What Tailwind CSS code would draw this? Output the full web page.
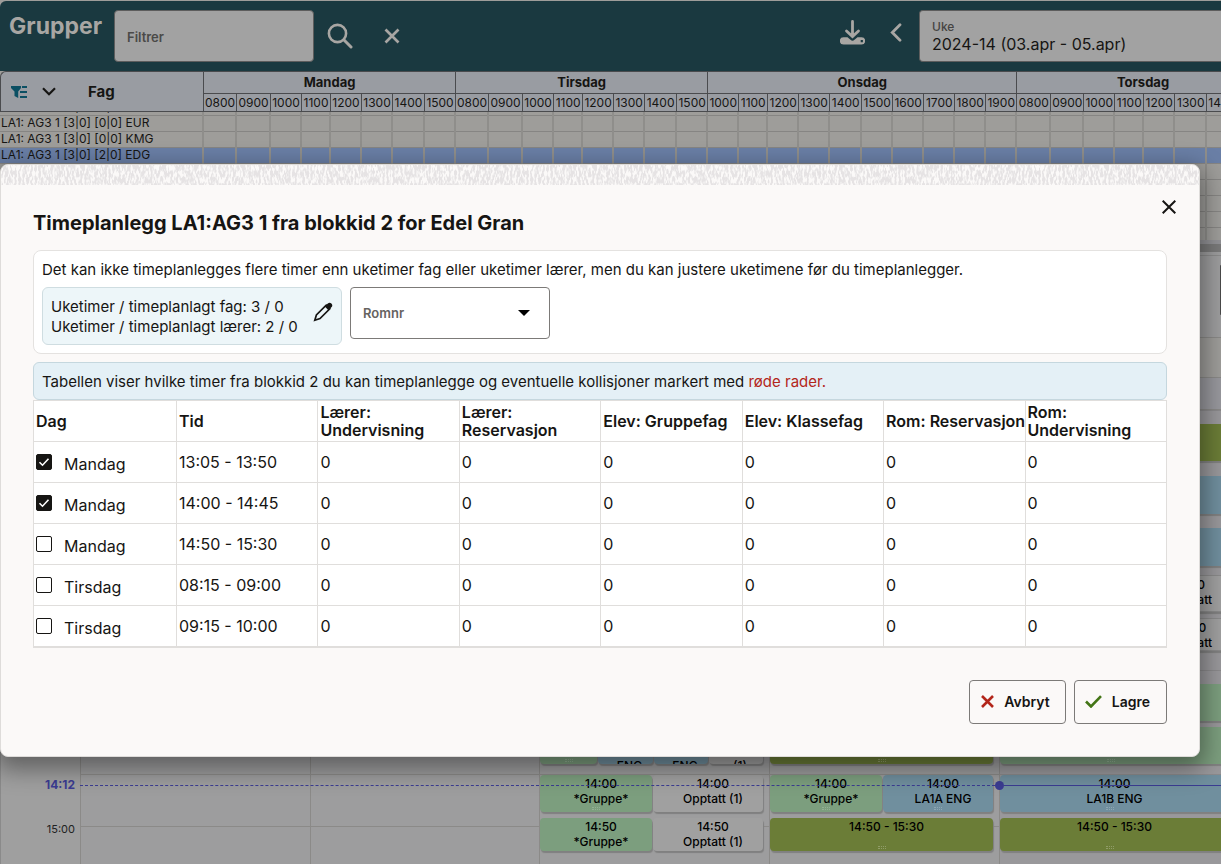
<!DOCTYPE html>
<html lang="no">
<head>
<meta charset="utf-8">
<title>Timeplanlegg</title>
<meta name="viewport" content="width=device-width, initial-scale=1">
<script src="https://cdn.jsdelivr.net/npm/@tailwindcss/browser@4"></script>
</head>
<body class="relative flex h-screen flex-col overflow-hidden bg-[#9e9d9a] pt-px font-['Inter',sans-serif] text-[#161513]">

<!-- Top bar -->
<header class="flex h-[70px] shrink-0 items-start overflow-hidden rounded-tl-md bg-[#1a3940] pl-[9px] text-[#a8a6a3]">
  <h1 class="mt-[9px] w-[105px] text-[23px] font-bold leading-8">Grupper</h1>
  <input type="text" aria-label="Filtrer" placeholder="Filtrer" class="mt-[9px] h-[52px] w-[200px] rounded border border-[#5d5d5d] bg-[#a2a2a2] px-3 pt-[2px] text-[13px] font-semibold text-[#161513] placeholder:text-[#4b4a48]">
  <button type="button" aria-label="Søk" class="mt-[22px] ml-[13px]">
    <svg class="h-[26px] w-[26px]" viewBox="0 0 26 26" fill="none" stroke="currentColor" stroke-width="2.600"><circle cx="10.500" cy="10.500" r="8.600"/><path d="M16.800 16.800 24 24" stroke-width="3" stroke-linecap="round"/></svg>
  </button>
  <button type="button" aria-label="Tøm" class="mt-[27px] ml-[31px]">
    <svg class="h-4 w-4" viewBox="0 0 16 16" fill="none" stroke="currentColor" stroke-width="2.700"><path d="m1.500 1.500 13 13m0-13-13 13"/></svg>
  </button>
  <div class="flex-1"></div>
  <button type="button" aria-label="Last ned" class="mt-[19px] mr-[25px]">
    <svg class="h-[25px] w-[25px]" viewBox="0 0 25 25"><path d="M12.500 1.500v14M6.500 11l6 5.500 6-5.500" fill="none" stroke="currentColor" stroke-width="2.800" stroke-linecap="round"/><path fill="currentColor" fill-rule="evenodd" d="M3.500 17.200h4l3 2.600a3 3 0 0 0 4 0l3-2.600h4a3.500 3.500 0 0 1 0 7.300h-18a3.500 3.500 0 0 1 0-7.300Zm17.200 2.800v2.200h2.200V20Z"/></svg>
  </button>
  <button type="button" aria-label="Forrige uke" class="mt-[22px] mr-[17px]">
    <svg class="h-[19px] w-[12px]" viewBox="0 0 12 19" fill="none" stroke="currentColor" stroke-width="2.800" stroke-linecap="round"><path d="M10 1.800 2.300 9.500l7.700 7.700"/></svg>
  </button>
  <div class="mt-[9px] h-[52px] w-[302px] shrink-0 rounded-l border border-r-0 border-[#5d5d5d] bg-[#a2a2a2] pt-2 pl-3 text-[#161513]">
    <label for="uke" class="block text-xs font-medium leading-4 text-[#454442]">Uke</label>
    <select id="uke" class="block w-full appearance-none text-base leading-[18px]"><option>2024-14 (03.apr - 05.apr)</option></select>
  </div>
</header>

<!-- Timeline -->
<section class="shrink-0 overflow-hidden" aria-label="Grupper per time">
  <div class="flex h-[41px] rounded-tl-md border-y border-l border-[#4a4b4e] bg-[#999ca2]">
    <div class="flex w-[202px] shrink-0 items-center pl-[10px]">
      <button type="button" aria-label="Filter"><svg class="h-[14px] w-4 text-[#0b4f63]" viewBox="0 0 16 14" fill="currentColor"><path d="M0 1h10v2L7.200 6.500V13L3.500 11V6.500L0 3ZM11 1h5v2h-5ZM9 6h7v2H9ZM9 11h7v2H9Z"/></svg></button>
      <button type="button" aria-label="Vis mer" class="ml-[15px]"><svg class="h-[9px] w-[14px]" viewBox="0 0 14 9" fill="none" stroke="currentColor" stroke-width="2.200"><path d="m1 1.200 6 6 6-6"/></svg></button>
      <span class="ml-8 pt-[2px] text-[15px] font-bold">Fag</span>
    </div>
    <table class="w-[1065px] shrink-0 table-fixed border-collapse text-[13px]">
      <colgroup id="headcols"></colgroup>
      <thead id="head"></thead>
    </table>
  </div>
  <div class="h-[128px] overflow-hidden">
    <table class="-mt-[13px] w-[1268px] table-fixed border-collapse text-xs">
      <colgroup id="bodycols"></colgroup>
      <tbody id="body"></tbody>
    </table>
  </div>
</section>
<div class="h-3 shrink-0 border-t-4 border-[#929296] bg-[#7a7a7a]"></div>

<!-- Calendar -->
<section class="flex min-h-0 flex-1 flex-col bg-[#9d9d9e] pt-[3px]" aria-label="Kalender">
  <div class="flex h-[82px] shrink-0 justify-end border-t border-[#8b8b8b] pt-[9px]">
    <button type="button" aria-label="Neste" class="h-[50px] w-px rounded-l bg-[#4a4a4a]"></button>
  </div>
  <div class="h-[41px] shrink-0 border-y border-[#8a8987] bg-[#9e9d9a]"></div>
  <div class="h-[32px] shrink-0 border-b border-[#8a8987] bg-[#98989d]"></div>
  <div class="relative grid min-h-0 flex-1 grid-cols-[80px_230px_229px_230px_230px_230px] text-center text-xs font-medium leading-[15px] text-black">
    <div class="flex flex-col border-l border-[#8a8a8a] bg-[#9f9f9f] pt-[368px] pr-[5px] text-right text-[11px] leading-[14px]">
      <time class="text-xs leading-[14px] font-bold text-[#3b3c92]">14:12</time>
      <time class="mt-[30px] font-normal text-[#222]">15:00</time>
    </div>
    <div class="border-l border-[#8b8a88] bg-[repeating-linear-gradient(to_bottom,#8b8a88_0_1px,transparent_1px_52px)]"></div>
    <div class="border-l border-[#8b8a88] bg-[repeating-linear-gradient(to_bottom,#8b8a88_0_1px,transparent_1px_52px)]"></div>
    <div class="flex flex-col gap-[6px] overflow-hidden border-l border-[#8b8a88] bg-[repeating-linear-gradient(to_bottom,#8b8a88_0_1px,transparent_1px_52px)] pt-[317px] pr-[6px]">
      <div class="mb-[5px] grid h-[37px] grid-cols-[57px_55px_54px_54px] gap-px">
        <div class="flex items-end justify-center rounded-sm bg-[#7c9e7e] pb-[2px] shadow-[1px_2px_1px_#808080]"><i class="h-[3px] w-2 border-y border-dotted border-[#93b095]"></i></div>
        <div class="overflow-hidden rounded-sm bg-[#708f9e] pt-[31px] pl-2 shadow-[1px_2px_1px_#808080]">ENG</div>
        <div class="overflow-hidden rounded-sm bg-[#708f9e] pt-[31px] pl-2 shadow-[1px_2px_1px_#808080]">ENG</div>
        <div class="overflow-hidden rounded-sm bg-[#a0a0a0] pt-[31px] pl-2 shadow-[1px_2px_1px_#808080]">(1)</div>
      </div>
      <div class="flex h-[37px] gap-px">
        <div class="flex w-[112px] flex-col items-center rounded-sm bg-[#7c9e7e] pt-px shadow-[1px_2px_1px_#808080]"><span class="pl-[10px]">14:00<br>*Gruppe*</span><i class="mt-px h-[3px] w-2 shrink-0 border-y border-dotted border-[#93b095]"></i></div>
        <div class="flex-1 rounded-sm bg-[#a0a0a0] pt-px pl-[10px] shadow-[1px_2px_1px_#808080]">14:00<br>Opptatt (1)</div>
      </div>
      <div class="flex h-[33px] gap-px">
        <div class="w-[112px] rounded-sm bg-[#7c9e7e] pt-px pl-[10px] shadow-[1px_2px_1px_#808080]">14:50<br>*Gruppe*</div>
        <div class="flex-1 rounded-sm bg-[#a0a0a0] pt-px pl-[10px] shadow-[1px_2px_1px_#808080]">14:50<br>Opptatt (1)</div>
      </div>
    </div>
    <div class="flex flex-col gap-[6px] overflow-hidden border-l border-[#8b8a88] bg-[repeating-linear-gradient(to_bottom,#8b8a88_0_1px,transparent_1px_52px)] pt-[317px] pr-[6px]">
      <div class="mb-[5px] flex h-[37px] items-end justify-center rounded-sm bg-[#6b7d37] pb-[2px] shadow-[1px_2px_1px_#808080]"><i class="h-[3px] w-2 border-y border-dotted border-[#909c68]"></i></div>
      <div class="flex h-[37px] gap-px">
        <div class="flex w-[112px] flex-col items-center rounded-sm bg-[#7c9e7e] pt-px shadow-[1px_2px_1px_#808080]"><span class="pl-[10px]">14:00<br>*Gruppe*</span><i class="mt-px h-[3px] w-2 shrink-0 border-y border-dotted border-[#93b095]"></i></div>
        <div class="flex flex-1 flex-col items-center rounded-sm bg-[#708f9e] pt-px shadow-[1px_2px_1px_#808080]"><span class="pl-[10px]">14:00<br>LA1A ENG</span><i class="mt-px h-[3px] w-2 shrink-0 border-y border-dotted border-[#8ea6b2]"></i></div>
      </div>
      <div class="flex h-[33px] flex-col items-center justify-between rounded-sm bg-[#6b7d37] pt-px pb-[2px] shadow-[1px_2px_1px_#808080]"><span class="pl-[10px]">14:50 - 15:30</span><i class="h-[3px] w-2 border-y border-dotted border-[#909c68]"></i></div>
    </div>
    <div class="flex flex-col overflow-hidden border-l border-[#8b8a88] bg-[#99989b] bg-[repeating-linear-gradient(to_bottom,#8b8a8c_0_1px,transparent_1px_52px)] pt-[14px]">
      <div class="h-[37px] shrink-0 rounded-sm bg-[#6b7d37] shadow-[1px_2px_1px_#808080]"></div>
      <div class="mt-[15px] h-[38px] shrink-0 rounded-sm bg-[#708f9e] shadow-[1px_2px_1px_#808080]"></div>
      <div class="mt-[14px] h-[38px] shrink-0 rounded-sm bg-[#708f9e] shadow-[1px_2px_1px_#808080]"></div>
      <div class="mt-[9px] h-[37px] shrink-0 rounded-sm border border-[#8a8a8a] bg-[#a0a0a0] pt-px pr-4 text-right shadow-[1px_2px_1px_#808080]"><span class="inline-block text-center">12:10<br>Opptatt</span></div>
      <div class="mt-[6px] h-[33px] shrink-0 rounded-sm border border-[#8a8a8a] bg-[#a0a0a0] pt-px pr-4 text-right shadow-[1px_2px_1px_#808080]"><span class="inline-block text-center">12:50<br>Opptatt</span></div>
      <div class="mt-[33px] h-[37px] shrink-0 rounded-sm bg-[#7c9e7e] shadow-[1px_2px_1px_#808080]"></div>
      <div class="mt-[6px] flex h-[37px] shrink-0 items-end justify-center rounded-sm bg-[#7c9e7e] pr-2 pb-[2px] shadow-[1px_2px_1px_#808080]"><i class="h-[3px] w-2 border-y border-dotted border-[#93b095]"></i></div>
      <div class="mt-[11px] flex h-[37px] shrink-0 flex-col items-center rounded-sm bg-[#708f9e] pt-px shadow-[1px_2px_1px_#808080]"><span>14:00<br>LA1B ENG</span><i class="mt-px mr-[10px] h-[3px] w-2 shrink-0 border-y border-dotted border-[#8ea6b2]"></i></div>
      <div class="mt-[6px] flex h-[33px] shrink-0 flex-col items-center justify-between rounded-sm bg-[#6b7d37] pt-px pb-[2px] shadow-[1px_2px_1px_#808080]">14:50 - 15:30<i class="mr-[10px] h-[3px] w-2 border-y border-dotted border-[#909c68]"></i></div>
    </div>
    <!-- Current time marker -->
    <div class="absolute top-[371px] right-0 left-[80px] flex h-[9px] items-center">
      <span class="w-[915px] border-t border-dashed border-[#3b3c92]"></span>
      <span class="h-[9px] w-[9px] rounded-full bg-[#3b3c92]"></span>
      <span class="flex-1 border-t border-[#3b3c92]"></span>
    </div>
  </div>
</section>

<!-- Dialog -->
<div role="dialog" aria-modal="true" aria-labelledby="dlg-title" class="absolute top-[164px] right-[21px] left-0 overflow-hidden rounded-lg border border-[#dedcda] bg-[#fbf9f8] shadow-[0_8px_24px_4px_rgba(0,0,0,0.4)]">
  <svg class="block h-[20px] w-full" aria-hidden="true">
    <filter id="weave" x="0" y="0" width="100%" height="100%" color-interpolation-filters="sRGB"><feTurbulence type="fractalNoise" baseFrequency="0.5 0.16" numOctaves="2" seed="4"/><feColorMatrix values="0 0 0 0 0.900  0 0 0 0 0.892  0 0 0 0 0.895  0 0 0 6 -2.400"/></filter>
    <rect width="100%" height="100%" filter="url(#weave)"/>
  </svg>
  <div class="flex flex-col px-8 pb-8">
    <div class="flex h-[65px] justify-between">
      <h2 id="dlg-title" class="mt-6 text-xl font-bold leading-7">Timeplanlegg LA1:AG3 1 fra blokkid 2 for Edel Gran</h2>
      <button type="button" aria-label="Lukk" class="mt-[15px] -mr-[9px] h-[14px] w-[14px]"><svg viewBox="0 0 14 14" fill="none" stroke="currentColor" stroke-width="2"><path d="m.700.700 12.600 12.600m0-12.600L.700 13.300"/></svg></button>
    </div>
    <div class="h-[104px] rounded-lg border border-[#e4e2e0] bg-white px-2 pt-[9px]">
      <p class="text-[15px] leading-5 whitespace-nowrap">Det kan ikke timeplanlegges flere timer enn uketimer fag eller uketimer lærer, men du kan justere uketimene før du timeplanlegger.</p>
      <div class="mt-[7px] flex gap-2">
        <div class="flex h-[58px] w-[300px] items-center justify-between rounded-md border border-[#cfdde1] bg-[#edf6f9] px-2 text-[15px] leading-5 whitespace-nowrap">
          <p class="pt-[2px]">Uketimer / timeplanlagt fag: 3 / 0<br>Uketimer / timeplanlagt lærer: 2 / 0</p>
          <button type="button" aria-label="Rediger" class="mb-2"><svg class="h-5 w-5" viewBox="0 0 20 20"><path d="M1.800 18.200 3.400 13 13.200 3.200l3.600 3.600L7 16.600Z" fill="none" stroke="currentColor" stroke-width="1.700"/><path d="m11.800 4.600 3-3a2.500 2.500 0 0 1 3.600 3.600l-3 3Z" fill="currentColor"/></svg></button>
        </div>
        <div class="relative h-[52px] w-[200px]">
          <select aria-label="Romnr" class="h-full w-full appearance-none rounded border border-[#7c7a78] bg-white px-3 pt-[2px] text-[13px] font-semibold text-[#66635f]"><option>Romnr</option></select>
          <svg class="pointer-events-none absolute top-[23px] right-5 h-[6px] w-3" viewBox="0 0 12 6"><path d="M0 0h12L6 6Z"/></svg>
        </div>
      </div>
    </div>
    <p class="mt-2 h-[38px] rounded-md border border-[#c5d7de] bg-[#e4f0f6] px-2 pt-px text-[15px] leading-9 whitespace-nowrap">Tabellen viser hvilke timer fra blokkid 2 du kan timeplanlegge og eventuelle kollisjoner markert med <span class="text-[#b3261a]">røde rader.</span></p>
    <table class="w-full table-fixed border-collapse border border-b-2 border-[#e0dedc] bg-white text-left text-base leading-[18px]">
      <thead>
        <tr class="h-[41px] [&>th]:border [&>th]:border-[#e0dedc] [&>th]:px-[2px] [&>th]:font-semibold">
          <th scope="col" class="w-[143px]">Dag</th><th scope="col">Tid</th><th scope="col">Lærer: Undervisning</th><th scope="col">Lærer: Reservasjon</th><th scope="col" class="whitespace-nowrap">Elev: Gruppefag</th><th scope="col" class="whitespace-nowrap">Elev: Klassefag</th><th scope="col" class="whitespace-nowrap">Rom: Reservasjon</th><th scope="col">Rom: Undervisning</th>
        </tr>
      </thead>
      <tbody id="slots"></tbody>
    </table>
    <div class="mt-8 flex justify-end gap-2 text-sm font-semibold">
      <button type="button" class="flex h-11 items-center gap-[10px] rounded border border-[#7c7a78] pr-[15px] pl-[11px]"><svg class="h-[13px] w-[13px] text-[#b3261a]" viewBox="0 0 13 13" fill="none" stroke="currentColor" stroke-width="2.600"><path d="m1 1 11 11M12 1 1 12"/></svg>Avbryt</button>
      <button type="button" class="flex h-11 items-center gap-[10px] rounded border border-[#7c7a78] pr-4 pl-[10px]"><svg class="h-[13px] w-[17px] text-[#437516]" viewBox="0 0 17 13" fill="none" stroke="currentColor" stroke-width="2.600"><path d="m1 6.500 5 5L16 1.200"/></svg>Lagre</button>
    </div>
  </div>
</div>

<script>
const days = [
  ['Mandag', 8, [33, 34, 31, 29, 31, 31, 32, 31]],
  ['Tirsdag', 8, [33, 34, 31, 29, 31, 31, 32, 31]],
  ['Onsdag', 10, [31, 29, 31, 31, 32, 31, 31, 31, 31, 31]],
  ['Torsdag', 8, [34, 33, 31, 29, 31, 32, 31, 31]]
];
const widths = days.flatMap(d => d[2]);
const cols = widths.map(w => `<col style="width:${w}px">`).join('');
document.getElementById('headcols').innerHTML = cols;
document.getElementById('bodycols').innerHTML = '<col style="width:203px">' + cols;
document.getElementById('head').innerHTML =
  '<tr class="h-[21px]">' + days.map(d => `<th scope="colgroup" colspan="${d[2].length}" class="border-b border-l border-[#4a4b4e] p-0 font-bold leading-5">${d[0]}</th>`).join('') + '</tr>' +
  '<tr class="h-[18px]">' + days.map(d => d[2].map((w, i) => `<th scope="col" class="border-l border-[#4a4b4e] p-0 pt-px text-xs font-normal leading-4">${String((d[1] + i) * 100).padStart(4, '0')}</th>`).join('')).join('') + '</tr>';
const names = ['LA1: AG3 1 [3|0] [0|0] EAB', 'LA1: AG3 1 [3|0] [0|0] EUR', 'LA1: AG3 1 [3|0] [0|0] KMG', 'LA1: AG3 1 [3|0] [2|0] EDG', '', '', '', '', ''];
document.getElementById('body').innerHTML = names.map((n, r) =>
  `<tr class="${r === 3 ? 'h-4 bg-[#6a7fa6]' : 'h-4'}"><th scope="row" class="border-b border-[#868583] p-0 pb-px pl-px text-left font-normal whitespace-nowrap"><span class="block h-[13px] overflow-hidden leading-[13px]">${n}</span></th>` +
  widths.map(() => '<td class="border-b border-l-2 border-b-[#868583] border-l-[#8f8e8b] p-0"></td>').join('') + '</tr>').join('');

const slots = [
  ['Mandag', '13:05 - 13:50', true], ['Mandag', '14:00 - 14:45', true], ['Mandag', '14:50 - 15:30', false],
  ['Tirsdag', '08:15 - 09:00', false], ['Tirsdag', '09:15 - 10:00', false]
];
document.getElementById('slots').innerHTML = slots.map((s, i) =>
  `<tr class="h-[41px]"><td class="border border-[#e0dedc] px-[2px]"><label class="flex items-center gap-3"><span class="relative h-4 w-4"><input type="checkbox" name="slot${i}" ${s[2] ? 'checked' : ''} class="peer block h-4 w-4 appearance-none rounded-[2px] border border-[#161513] bg-white checked:bg-[#161513]"><svg class="pointer-events-none absolute inset-0 hidden h-4 w-4 peer-checked:block" viewBox="0 0 16 16" fill="none" stroke="#fff" stroke-width="1.600"><path d="m3.500 8.200 3 3 6-6.500"/></svg></span><span class="pt-1">${s[0]}</span></label></td>` +
  `<td class="border border-[#e0dedc] px-[2px]">${s[1]}</td>` + '<td class="border border-[#e0dedc] px-[2px]">0</td>'.repeat(6) + '</tr>').join('');
</script>
</body>
</html>
